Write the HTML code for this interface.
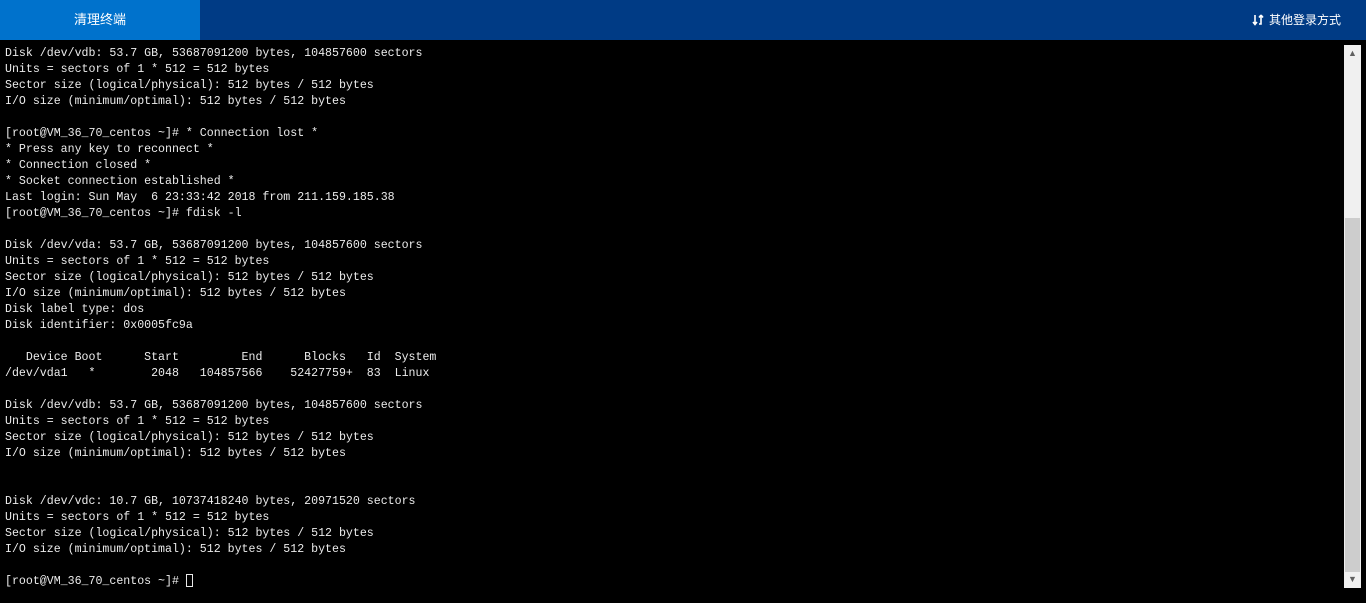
<!DOCTYPE html>
<html><head><meta charset="utf-8"><style>
*{margin:0;padding:0;box-sizing:border-box}
body{width:1366px;height:603px;background:#000;overflow:hidden;position:relative;font-family:"Liberation Sans","Noto Sans CJK SC",sans-serif}
.hdr{position:absolute;left:0;top:0;width:1366px;height:40px;background:#003b85}
.tab{position:absolute;left:0;top:0;width:200px;height:40px;background:#0072cc;color:#fff;font-size:13px;line-height:40px;text-align:center}
.alt{position:absolute;right:25px;top:0;height:40px;line-height:40px;color:#fff;font-size:12px;display:flex;align-items:center;gap:5px}
pre{position:absolute;left:5px;top:46px;font-family:"Liberation Mono",monospace;font-size:11.6px;line-height:16px;color:#ececec}
.sb{position:absolute;left:1344px;top:45px;width:17px;height:543px;background:#f0f0f0}
.th{position:absolute;left:1px;top:173px;width:15px;height:354px;background:#cdcdcd}
.ar{position:absolute;left:0;width:17px;height:17px;color:#606060;font-size:9px;text-align:center;line-height:17px}
.cur{display:inline-block;width:7px;height:13px;border:1px solid #e8e8e8;vertical-align:-3px}
</style></head><body>
<div class="hdr"><div class="tab">清理终端</div>
<div class="alt"><svg width="12" height="12" viewBox="0 0 12 12" fill="none" stroke="#fff" stroke-width="1.6"><path d="M3 1v9M1 8l2 2.5L5 8M7 10h2V2M9 1L7 3.5M9 1l2 2.5"/></svg><span>其他登录方式</span></div></div>
<pre>Disk /dev/vdb: 53.7 GB, 53687091200 bytes, 104857600 sectors
Units = sectors of 1 * 512 = 512 bytes
Sector size (logical/physical): 512 bytes / 512 bytes
I/O size (minimum/optimal): 512 bytes / 512 bytes

[root@VM_36_70_centos ~]# * Connection lost *
* Press any key to reconnect *
* Connection closed *
* Socket connection established *
Last login: Sun May  6 23:33:42 2018 from 211.159.185.38
[root@VM_36_70_centos ~]# fdisk -l

Disk /dev/vda: 53.7 GB, 53687091200 bytes, 104857600 sectors
Units = sectors of 1 * 512 = 512 bytes
Sector size (logical/physical): 512 bytes / 512 bytes
I/O size (minimum/optimal): 512 bytes / 512 bytes
Disk label type: dos
Disk identifier: 0x0005fc9a

   Device Boot      Start         End      Blocks   Id  System
/dev/vda1   *        2048   104857566    52427759+  83  Linux

Disk /dev/vdb: 53.7 GB, 53687091200 bytes, 104857600 sectors
Units = sectors of 1 * 512 = 512 bytes
Sector size (logical/physical): 512 bytes / 512 bytes
I/O size (minimum/optimal): 512 bytes / 512 bytes


Disk /dev/vdc: 10.7 GB, 10737418240 bytes, 20971520 sectors
Units = sectors of 1 * 512 = 512 bytes
Sector size (logical/physical): 512 bytes / 512 bytes
I/O size (minimum/optimal): 512 bytes / 512 bytes

[root@VM_36_70_centos ~]# <span class="cur"></span></pre>
<div class="sb"><div class="ar" style="top:0">&#9650;</div><div class="th"></div><div class="ar" style="bottom:0">&#9660;</div></div>
</body></html>
